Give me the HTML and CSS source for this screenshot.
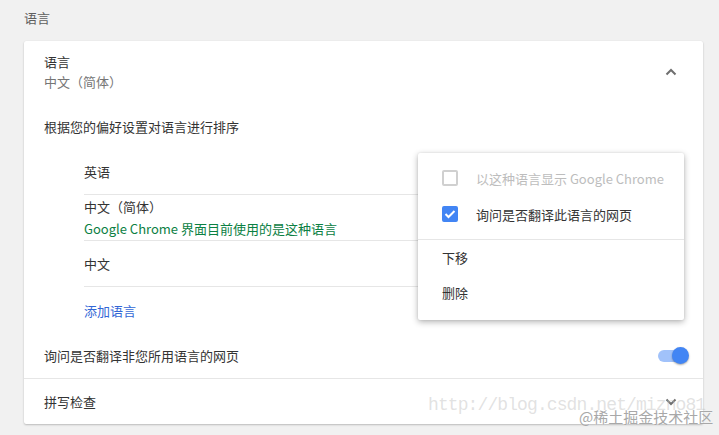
FILE: index.html
```html
<!DOCTYPE html>
<html lang="zh-CN">
<head>
<meta charset="utf-8">
<link rel="stylesheet" href="styles.css">
</head>
<body>
<div class="page">
  <h2 class="section-title">语言</h2>
  <div class="card">
    <div class="header-row">
      <div class="header-text">
        <div class="primary">语言</div>
        <div class="secondary">中文（简体）</div>
      </div>
      <svg class="chevron" width="12" height="8" viewBox="0 0 12 8"><path d="M1.5 6.5 L6 2 L10.5 6.5" fill="none" stroke="#6f6f6f" stroke-width="2"/></svg>
    </div>
    <div class="desc">根据您的偏好设置对语言进行排序</div>
    <div class="lang-list">
      <div class="lang-row">英语</div>
      <div class="lang-row two">
        <div>中文（简体）</div>
        <div class="ui-lang">Google Chrome 界面目前使用的是这种语言</div>
      </div>
      <div class="lang-row">中文</div>
      <div class="add-row">添加语言</div>
    </div>
    <div class="toggle-row">
      <span>询问是否翻译非您所用语言的网页</span>
      <span class="toggle"><span class="track"></span><span class="knob"></span></span>
    </div>
    <div class="spell-row">
      <span>拼写检查</span>
      <svg class="chevron" width="12" height="8" viewBox="0 0 12 8"><path d="M1.5 1.5 L6 6 L10.5 1.5" fill="none" stroke="#6f6f6f" stroke-width="2"/></svg>
    </div>

    <div class="menu">
      <div class="menu-item disabled">
        <span class="checkbox"></span>
        <span>以这种语言显示 Google Chrome</span>
      </div>
      <div class="menu-item">
        <span class="checkbox checked"><svg width="12" height="10" viewBox="0 0 12 10"><path d="M1.5 5 L4.5 8 L10.5 2" fill="none" stroke="#fff" stroke-width="2"/></svg></span>
        <span>询问是否翻译此语言的网页</span>
      </div>
      <div class="menu-sep"></div>
      <div class="menu-item plain">下移</div>
      <div class="menu-item plain">删除</div>
    </div>
  </div>
  <div class="wm-url">http://blog.csdn.net/mizno81</div>
  <div class="wm-site">@稀土掘金技术社区</div>
</div>
</body>
</html>
```

FILE: styles.css
```css
* { box-sizing: border-box; }
html, body {
  margin: 0;
  padding: 0;
  background: #f1f1f1;
  font-family: "Noto Sans CJK SC", "Roboto", sans-serif;
  font-size: 13px;
  color: #333;
}
.page {
  position: relative;
  width: 719px;
  height: 435px;
  padding: 8px 0 0 24px;
  overflow: hidden;
}
.section-title {
  margin: 0 0 13px 0;
  font-size: 13px;
  font-weight: normal;
  line-height: 20px;
  color: #5f5f5f;
}
.card {
  position: relative;
  width: 679px;
  height: 383px;
  background: #fff;
  border-radius: 2px;
  box-shadow: 0 1px 2px rgba(0,0,0,0.22), 0 0 1px rgba(0,0,0,0.08);
}
.header-row {
  display: flex;
  align-items: center;
  justify-content: space-between;
  padding: 11px 19px 12px 20px;
}
.header-text { line-height: 20px; }
.secondary { color: #757575; }
.chevron { display: block; margin-right: 7px; }
.desc {
  padding: 13px 20px 0 20px;
  line-height: 20px;
}
.lang-list {
  margin: 12px 20px 0 60px;
}
.lang-row {
  display: flex;
  flex-direction: column;
  justify-content: center;
  height: 46px;
  border-bottom: 1px solid #e6e6e6;
  line-height: 20px;
}
.lang-row.two { line-height: 22px; }
.ui-lang { color: #0b8043; }
.add-row {
  height: 46px;
  display: flex;
  align-items: center;
  color: #3367d6;
}
.toggle-row {
  display: flex;
  align-items: center;
  justify-content: space-between;
  height: 46px;
  padding: 0 14px 1px 20px;
  border-bottom: 1px solid #e6e6e6;
}
.toggle {
  position: relative;
  width: 31px;
  height: 17px;
  display: block;
}
.track {
  position: absolute;
  left: 0;
  top: 3px;
  width: 27px;
  height: 12px;
  border-radius: 6px;
  background: #a1c2fa;
}
.knob {
  position: absolute;
  right: 0;
  top: 0;
  width: 17px;
  height: 17px;
  border-radius: 50%;
  background: #4285f4;
  box-shadow: 0 1px 2px rgba(0,0,0,0.35);
}
.spell-row {
  display: flex;
  align-items: center;
  justify-content: space-between;
  height: 45px;
  padding: 0 19px 0 20px;
}
.menu {
  position: absolute;
  left: 394px;
  top: 112px;
  width: 266px;
  padding: 7px 0 10px 0;
  background: #fff;
  border-radius: 2px;
  box-shadow: 0 2px 6px rgba(0,0,0,0.3), 0 0 2px rgba(0,0,0,0.1);
}
.menu-item {
  display: flex;
  align-items: center;
  height: 36px;
  padding: 0 24px;
  gap: 18px;
  white-space: nowrap;
}
.menu-item.plain { height: 35px; }
.menu-item.disabled { color: #bdbdbd; }
.checkbox {
  width: 16px;
  height: 16px;
  border: 2px solid #d0d0d0;
  border-radius: 2px;
  display: flex;
  align-items: center;
  justify-content: center;
  flex: none;
}
.checkbox.checked {
  background: #4285f4;
  border-color: #4285f4;
}
.menu-sep {
  margin-top: 7px;
  height: 1px;
  background: #e6e6e6;
}
.wm-url {
  position: absolute;
  left: 428px;
  top: 395px;
  font-family: "Liberation Mono", monospace;
  font-size: 18px;
  letter-spacing: -0.9px;
  color: rgba(190,190,190,0.45);
  white-space: nowrap;
}
.wm-site {
  position: absolute;
  left: 579px;
  top: 407px;
  font-size: 15px;
  line-height: 20px;
  color: #a8a8a8;
  text-shadow: 0 0 1px #fff;
  white-space: nowrap;
}
```
